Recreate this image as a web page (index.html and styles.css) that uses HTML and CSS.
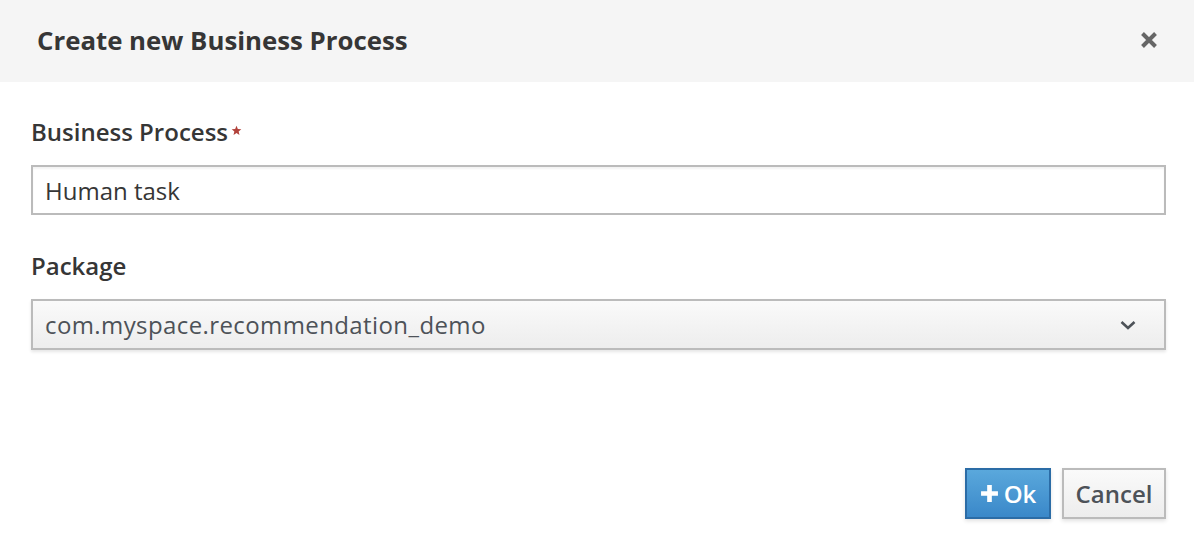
FILE: index.html
```html
<!DOCTYPE html>
<html>
<head>
<meta charset="utf-8">
<link rel="stylesheet" href="styles.css">
</head>
<body>
<div class="modal">
  <div class="modal-header">
    <h1 class="modal-title">Create new Business Process</h1>
    <button class="close" aria-label="Close">
      <svg width="18" height="18" viewBox="0 0 18 18"><path d="M2.5 2.5 L15.5 15.5 M15.5 2.5 L2.5 15.5" stroke="#666" stroke-width="4"/></svg>
    </button>
  </div>
  <div class="modal-body">
    <div class="field">
      <label class="label">Business Process<svg class="req" width="11" height="11" viewBox="0 0 24 24"><path d="M12 1.5 L14.9 8.6 L22.5 9.2 L16.7 14.2 L18.5 21.6 L12 17.6 L5.5 21.6 L7.3 14.2 L1.5 9.2 L9.1 8.6 Z" fill="#b2423b"/></svg></label>
      <div class="input">Human task</div>
    </div>
    <div class="field">
      <label class="label">Package</label>
      <div class="select">
        <span class="select-text">com.myspace.recommendation_demo</span>
        <svg class="chev" width="16" height="10" viewBox="0 0 16 10"><path d="M1.5 2 L8 8 L14.5 2" fill="none" stroke="#4d5258" stroke-width="2.6"/></svg>
      </div>
    </div>
  </div>
  <div class="modal-footer">
    <button class="btn btn-primary"><svg class="plus" width="19" height="19" viewBox="0 0 18 18"><path d="M9 1 V17 M1 9 H17" stroke="#fff" stroke-width="4.4"/></svg>Ok</button>
    <button class="btn btn-default">Cancel</button>
  </div>
</div>
</body>
</html>
```
FILE: styles.css
```css
html, body {
  margin: 0;
  padding: 0;
  background: #fff;
}
body {
  font-family: "Open Sans", "Noto Sans", sans-serif;
  color: #363636;
  width: 1194px;
  height: 548px;
  overflow: hidden;
}
.modal {
  display: flex;
  flex-direction: column;
  height: 548px;
}
.modal-header {
  background: #f5f5f5;
  height: 82px;
  box-sizing: border-box;
  padding: 0 36px 2px 37px;
  display: flex;
  align-items: center;
  justify-content: space-between;
}
.modal-title {
  margin: 0;
  font-size: 25.8px;
  font-weight: 700;
  color: #363636;
  line-height: 34px;
}
.close {
  border: 0;
  background: none;
  padding: 0;
  width: 18px;
  height: 18px;
  display: flex;
  margin-top: -1px;
}
.modal-body {
  padding: 34px 28px 0 31px;
  display: flex;
  flex-direction: column;
  gap: 35px;
}
.field {
  display: flex;
  flex-direction: column;
  gap: 17px;
}
.label {
  font-size: 24px;
  font-weight: 600;
  color: #363636;
  line-height: 32px;
  height: 32px;
}
.req {
  vertical-align: top;
  margin-left: 3px;
  margin-top: 9px;
}
.input {
  height: 50px;
  box-sizing: border-box;
  border: 2px solid #bbb;
  box-shadow: inset 0 2px 2px rgba(3,3,3,0.05);
  padding: 0 12px;
  display: flex;
  align-items: center;
  font-size: 24px;
  color: #363636;
}
.select {
  height: 51px;
  box-sizing: border-box;
  border: 2px solid #bbb;
  background: linear-gradient(to bottom, #fafafa 0%, #ededed 100%);
  box-shadow: 0 2px 3px rgba(3,3,3,0.1);
  padding: 0 28px 0 12px;
  display: flex;
  align-items: center;
  justify-content: space-between;
  font-size: 24px;
  color: #4d5258;
}
.select-text {
  letter-spacing: 0.4px;
}
.modal-footer {
  margin-top: auto;
  padding: 0 28px 29px 0;
  display: flex;
  justify-content: flex-end;
  gap: 11px;
}
.btn {
  height: 51px;
  box-sizing: border-box;
  border: 2px solid;
  font-family: inherit;
  font-size: 24px;
  font-weight: 600;
  padding: 0;
  display: flex;
  align-items: center;
  justify-content: center;
  box-shadow: 0 2px 4px rgba(3,3,3,0.12);
}
.btn-primary {
  width: 86px;
  background: linear-gradient(to bottom, #5aa8dc 0%, #3a88c9 100%);
  border-color: #2b6ca6;
  color: #fff;
}
.plus {
  margin-right: 5px;
}
.btn-default {
  width: 104px;
  background: linear-gradient(to bottom, #fafafa 0%, #ededed 100%);
  border-color: #bbb;
  color: #4d5258;
}
```
